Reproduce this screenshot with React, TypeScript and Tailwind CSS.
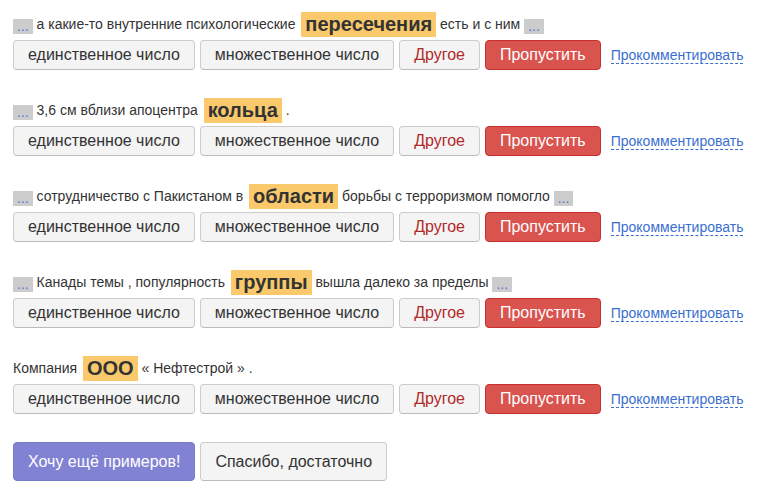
import React from "react";

const items: { before: string; word: string; after: string; l: boolean; r: boolean }[] = [
  { before: "а какие-то внутренние психологические", word: "пересечения", after: "есть и с ним", l: true, r: true },
  { before: "3,6 см вблизи апоцентра", word: "кольца", after: ".", l: true, r: false },
  { before: "сотрудничество с Пакистаном в", word: "области", after: "борьбы с терроризмом помогло", l: true, r: true },
  { before: "Канады темы , популярность", word: "группы", after: "вышла далеко за пределы", l: true, r: true },
  { before: "Компания", word: "ООО", after: "« Нефтестрой » .", l: false, r: false },
];

function Dots() {
  return (
    <span className="inline-block bg-[#cccccc] text-[#5a6fd2] text-[14px] leading-[15px] h-[15px] px-[4px] align-[-2px]">...</span>
  );
}

function Block({ it }: { it: (typeof items)[number] }) {
  return (
    <div className="mb-[28px]">
      <div className="h-[25px] text-[14px] leading-[25px] text-[#333333] whitespace-nowrap">
        {it.l && (
          <>
            <Dots />{" "}
          </>
        )}
        {it.before}{" "}
        <span className="inline-block ml-[2px] h-[25px] bg-[#f9c96b] font-bold text-[20px] leading-[25px] px-[4px] text-[#333333] align-top">{it.word}</span>{" "}
        {it.after}
        {it.r && (
          <>
            {" "}
            <Dots />
          </>
        )}
      </div>
      <div className="mt-[3px] flex items-center gap-[5px]">
        <button className="h-[30px] px-[14px] text-[16px] leading-[20px] text-[#333333] bg-[#f4f4f4] border border-[#cccccc] border-b-[#bbbbbb] rounded-[4px]">единственное число</button>
        <button className="h-[30px] px-[14px] text-[16px] leading-[20px] text-[#333333] bg-[#f4f4f4] border border-[#cccccc] border-b-[#bbbbbb] rounded-[4px]">множественное число</button>
        <button className="h-[30px] px-[14px] text-[16px] leading-[20px] text-[#b02a2a] bg-[#f4f4f4] border border-[#cccccc] border-b-[#bbbbbb] rounded-[4px]">Другое</button>
        <button className="h-[30px] px-[14px] text-[16px] leading-[20px] text-white bg-[#d9534f] border border-[#c9302c] rounded-[4px]">Пропустить</button>
        <a className="ml-[5px] text-[14px] leading-[16px] text-[#3a6fd0] border-b border-dashed border-[#3a6fd0]">Прокомментировать</a>
      </div>
    </div>
  );
}

export default function App() {
  return (
    <div className="w-[761px] h-[492px] bg-white pl-[13px] pt-[12px] font-['Liberation_Sans',Arial,sans-serif] overflow-hidden">
      {items.map((it, i) => (
        <Block key={i} it={it} />
      ))}
      <div className="flex gap-[5px] mt-[2px]">
        <button className="h-[39px] px-[14px] text-[16px] leading-[22px] text-white bg-[#8282d4] border border-[#7a7acc] rounded-[4px]">Хочу ещё примеров!</button>
        <button className="h-[39px] px-[14px] text-[16px] leading-[22px] text-[#333333] bg-[#f4f4f4] border border-[#cccccc] border-b-[#bbbbbb] rounded-[4px]">Спасибо, достаточно</button>
      </div>
    </div>
  );
}
